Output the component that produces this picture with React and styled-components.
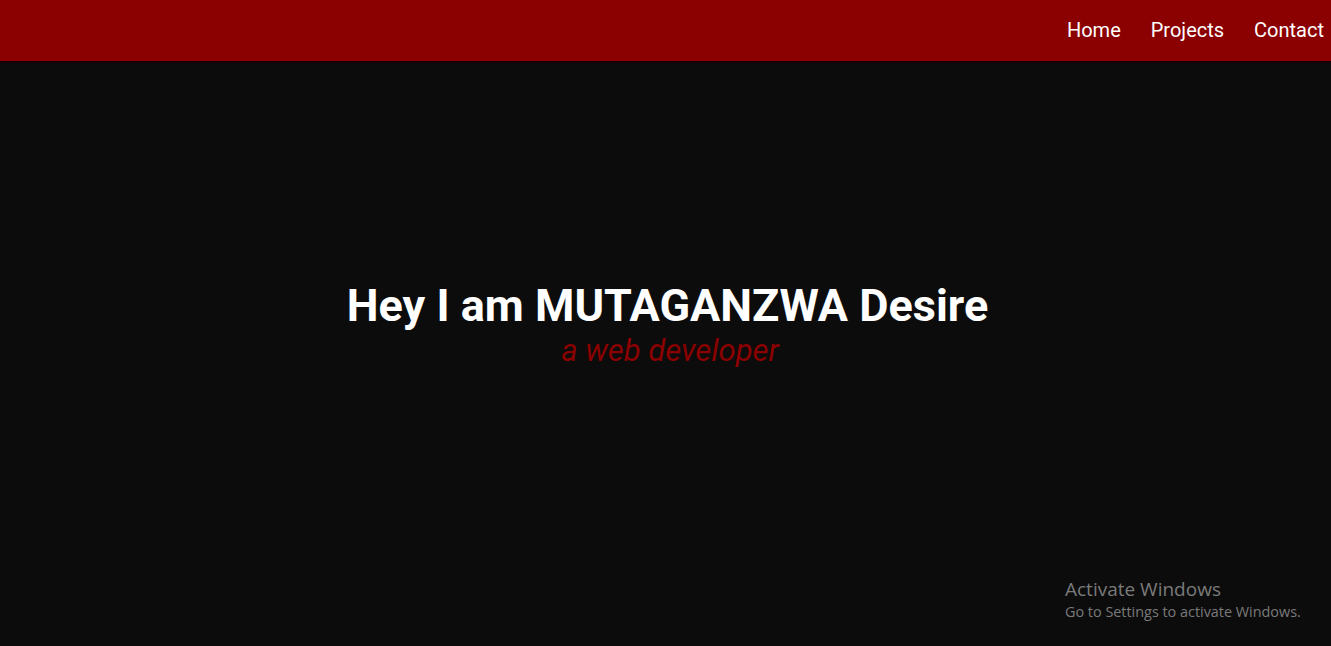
import React from 'react';
import styled, { createGlobalStyle } from 'styled-components';

const GlobalStyle = createGlobalStyle`
  html, body {
    margin: 0;
    padding: 0;
    background-color: #0c0c0c;
    font-family: Roboto, 'Liberation Sans', sans-serif;
  }
`;

const Page = styled.div`
  min-height: 646px;
  display: flex;
  flex-direction: column;
  position: relative;
  background-color: #0c0c0c;
`;

const Header = styled.header`
  height: 61px;
  background-color: #8b0000;
  border-bottom: 2px solid #1a0000;
  display: flex;
  justify-content: flex-end;
  align-items: center;
  padding-right: 7px;
`;

const Nav = styled.nav`
  display: flex;
  gap: 30px;
  margin-top: -2px;
`;

const NavLink = styled.a`
  color: #ffffff;
  font-size: 20px;
  text-decoration: none;
  cursor: pointer;
`;

const Hero = styled.main`
  flex: 1;
  display: flex;
  flex-direction: column;
  align-items: center;
  justify-content: center;
  padding: 0 0 58px 4px;
`;

const Title = styled.h1`
  margin: 0;
  color: #ffffff;
  font-size: 45px;
  font-weight: 700;
  line-height: 1.2;
`;

const Subtitle = styled.p`
  margin: -2px 0 0;
  padding-left: 5px;
  color: #8b0000;
  font-size: 31px;
  font-style: italic;
  line-height: 1.3;
`;

const Watermark = styled.div`
  position: absolute;
  left: 1065px;
  top: 577px;
  color: #7a7a7a;
  font-family: 'Open Sans', 'Noto Sans', sans-serif;
`;

const WatermarkTitle = styled.div`
  font-size: 19px;
  line-height: 25px;
`;

const WatermarkText = styled.div`
  font-size: 14.4px;
  line-height: 20px;
`;

const App = () => {
  return (
    <Page>
      <GlobalStyle />
      <Header>
        <Nav>
          <NavLink>Home</NavLink>
          <NavLink>Projects</NavLink>
          <NavLink>Contact</NavLink>
        </Nav>
      </Header>
      <Hero>
        <Title>Hey I am MUTAGANZWA Desire</Title>
        <Subtitle>a web developer</Subtitle>
      </Hero>
      <Watermark>
        <WatermarkTitle>Activate Windows</WatermarkTitle>
        <WatermarkText>Go to Settings to activate Windows.</WatermarkText>
      </Watermark>
    </Page>
  );
};

export default App;
